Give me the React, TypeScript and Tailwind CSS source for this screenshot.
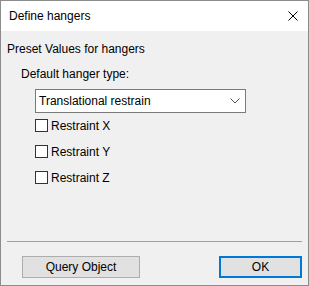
import React from 'react';

const checks = ['Restraint X', 'Restraint Y', 'Restraint Z'];

export default function App() {
  return (
    <div
      className="flex h-[286px] w-[309px] flex-col border border-[#8c8c8c] bg-[#f0f0f0] text-[12px] leading-[16px] text-black"
      style={{ fontFamily: '"Segoe UI", "Liberation Sans", Arial, sans-serif' }}
    >
      {/* Title bar */}
      <div className="flex h-[30px] shrink-0 items-center justify-between bg-white pl-[8px] pr-[10px]">
        <span>Define hangers</span>
        <svg width="10" height="10" viewBox="0 0 10 10" className="mt-[-1px]">
          <path d="M0.5 0.5 L9.5 9.5 M9.5 0.5 L0.5 9.5" stroke="#000" strokeWidth="1" />
        </svg>
      </div>

      {/* Body */}
      <div className="flex flex-1 flex-col">
        <div className="mt-[10px] pl-[6px]">Preset Values for hangers</div>
        <div className="mt-[9px] pl-[20px]">Default hanger type:</div>

        <div className="ml-[34px] mt-[7px] flex h-[24px] w-[211px] items-center justify-between border border-[#7a7a7a] bg-white pl-[3px] pr-[5px]">
          <span>Translational restrain</span>
          <svg width="10" height="6" viewBox="0 0 10 6">
            <path d="M0.5 0.5 L5 5 L9.5 0.5" fill="none" stroke="#555" strokeWidth="1" />
          </svg>
        </div>

        <div className="ml-[34px] mt-[6px] flex flex-col gap-[13px]">
          {checks.map((c) => (
            <label key={c} className="flex h-[13px] items-center gap-[3px]">
              <span className="h-[13px] w-[13px] shrink-0 border border-[#333] bg-white" />
              <span>{c}</span>
            </label>
          ))}
        </div>

        <div className="flex-1" />

        <div className="mx-[6px] h-px bg-[#a0a0a0]" />

        <div className="mb-[7px] ml-[21px] mr-[6px] mt-[14px] flex items-center justify-between">
          <button className="flex h-[22px] w-[118px] items-center justify-center border border-[#adadad] bg-[#e1e1e1]">
            Query Object
          </button>
          <button className="flex h-[22px] w-[83px] items-center justify-center border-2 border-[#0078d7] bg-[#e1e1e1]">
            OK
          </button>
        </div>
      </div>
    </div>
  );
}
